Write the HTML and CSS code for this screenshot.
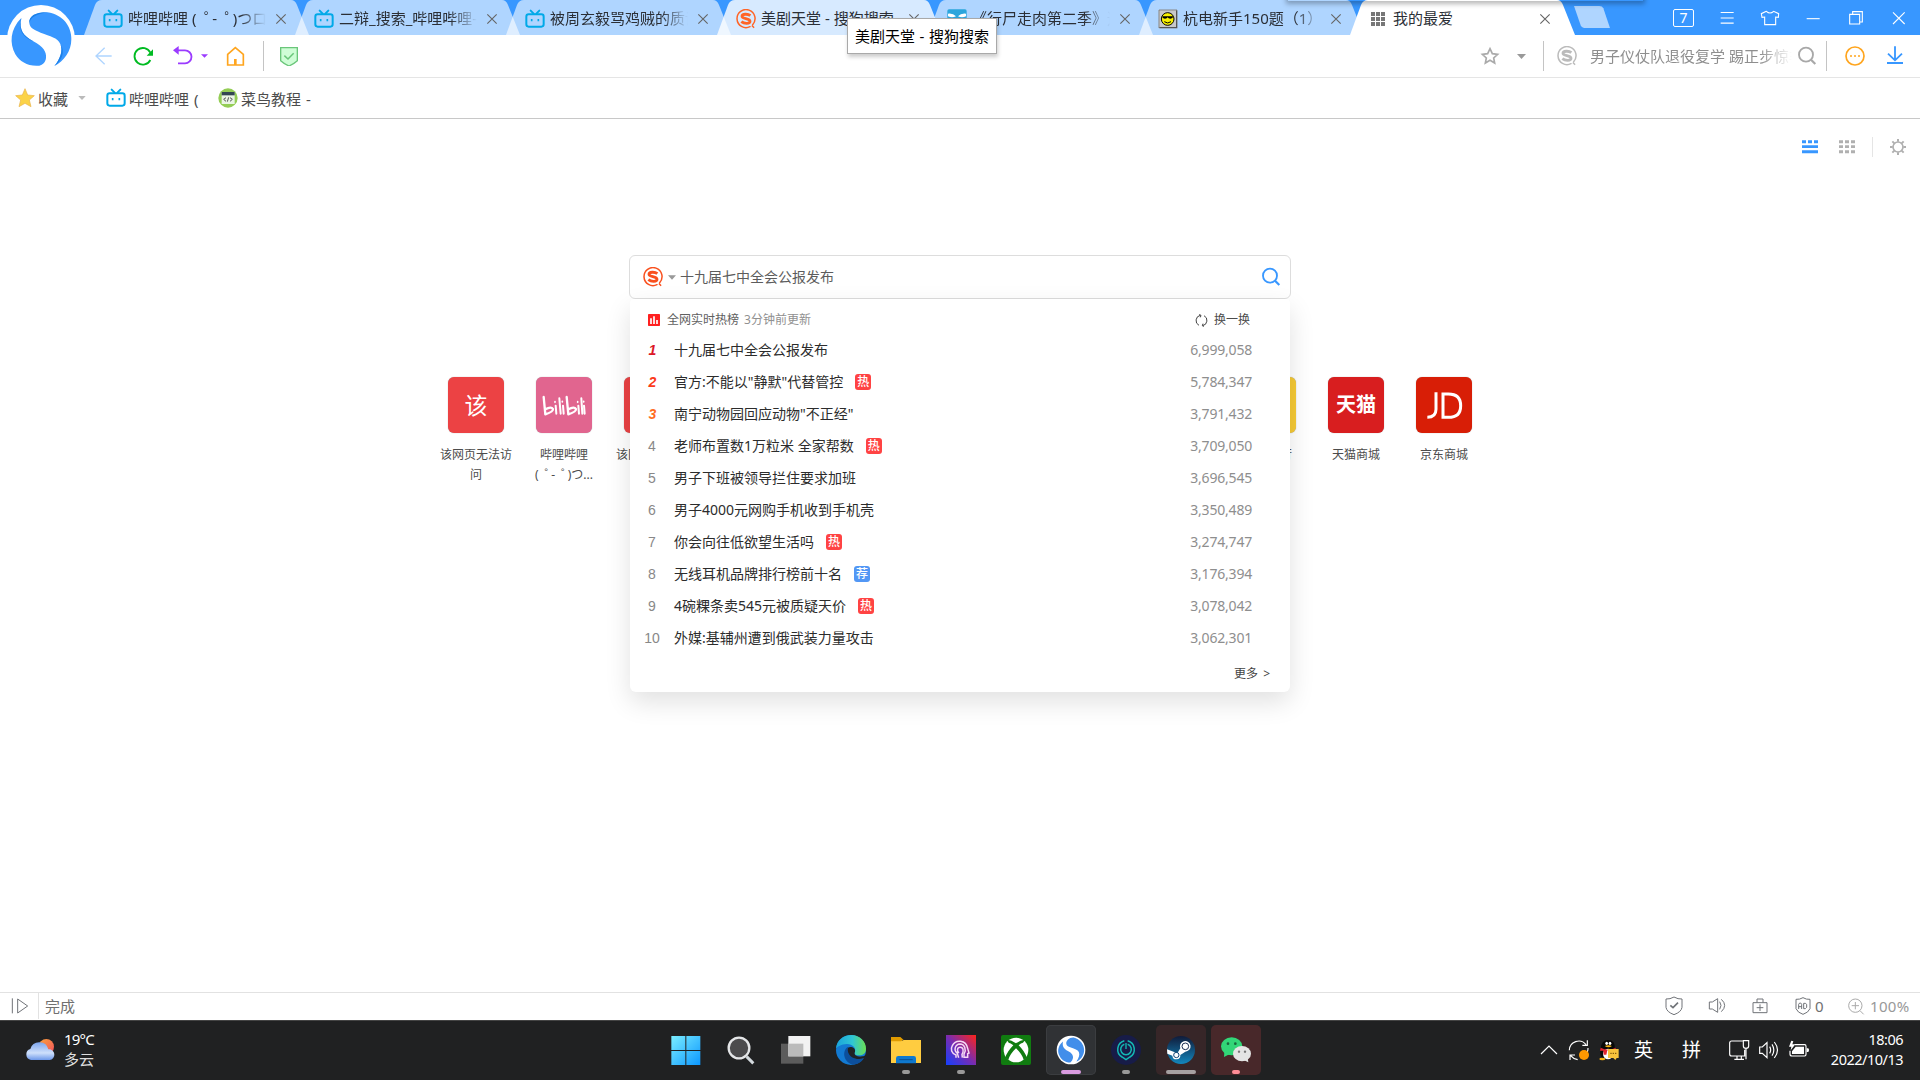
FILE: index.html
```html
<!DOCTYPE html>
<html lang="zh-CN">
<head>
<meta charset="utf-8">
<title>我的最爱</title>
<link rel="stylesheet" href="styles.css">
</head>
<body>
<svg class="defs" width="0" height="0">
  <symbol id="bili" viewBox="0 0 60 60"><path d="M17 5l9 9M43 5l-9 9" stroke="#00a9e8" stroke-width="6" stroke-linecap="round"/><rect x="4" y="16" width="52" height="37" rx="7" fill="none" stroke="#00a9e8" stroke-width="6"/><path d="M20 30v7M40 30v7" stroke="#00a9e8" stroke-width="5"/></symbol>
  <symbol id="sogou" viewBox="0 0 60 60"><path d="M42 53A27 27 0 1 1 50 47M49 51l4 4" fill="none" stroke="currentColor" stroke-width="4.500" stroke-linecap="round"/><path d="M43 20C36 14 18 14 18 22C18 31 42 27 42 37C42 45 25 45 16 38" fill="none" stroke="currentColor" stroke-width="8.500"/></symbol>
  <symbol id="cross" viewBox="0 0 36 36"><path d="M4 4L32 32M32 4L4 32" stroke="currentColor" stroke-width="3.400"/></symbol>
  <symbol id="lens" viewBox="0 0 60 60"><circle cx="27" cy="26" r="21" fill="none" stroke="currentColor" stroke-width="5.500"/><path d="M42 41L55 54" stroke="currentColor" stroke-width="6.500"/></symbol>
</svg>

<header class="tabbar">
  <nav class="tabs">
    <div class="tab"><svg class="fav"><use href="#bili"/></svg><span class="tab-title">哔哩哔哩 (<i class="kana">゜</i>-<i class="kana">゜</i>)つロ</span><svg class="x"><use href="#cross"/></svg></div>
    <div class="tab"><svg class="fav"><use href="#bili"/></svg><span class="tab-title">二辩_搜索_哔哩哔哩-</span><svg class="x"><use href="#cross"/></svg></div>
    <div class="tab"><svg class="fav"><use href="#bili"/></svg><span class="tab-title">被周玄毅骂鸡贼的质询</span><svg class="x"><use href="#cross"/></svg></div>
    <div class="tab hover"><svg class="fav orange"><use href="#sogou"/></svg><span class="tab-title">美剧天堂 - 搜狗搜索</span><svg class="x"><use href="#cross"/></svg></div>
    <div class="tab"><svg class="fav" viewBox="0 0 60 60"><rect x="1" y="1" width="58" height="58" rx="5" fill="#2ba5dc"/><path d="M3 14Q18 12 27 22Q15 28 3 22zM57 14Q42 12 33 22Q45 28 57 22zM20 58L30 34 40 58z" fill="#fff"/></svg><span class="tab-title">《行尸走肉第二季》迅</span><svg class="x"><use href="#cross"/></svg></div>
    <div class="tab"><svg class="fav" viewBox="0 0 60 60"><path d="M2 2H58V58H2z" fill="#c8c8c8"/><path d="M56 4V56H4" fill="none" stroke="#555" stroke-width="4"/><path d="M3 57V3H57" fill="none" stroke="#666" stroke-width="2"/><circle cx="29" cy="30" r="19" fill="#f8f000" stroke="#000" stroke-width="3"/><path d="M13 22H45V25Q42 29 37 29Q31 29 29 25Q27 29 21 29Q15 29 13 25z"/><path d="M19 38Q29 46 39 38" fill="none" stroke="#000" stroke-width="3"/></svg><span class="tab-title">杭电新手150题（1）</span><svg class="x"><use href="#cross"/></svg></div>
    <div class="tab active"><svg class="fav" viewBox="0 0 60 60"><path d="M9 9h12v12H9zM24 9h12v12H24zM39 9h12v12H39zM9 24h12v12H9zM24 24h12v12H24zM39 24h12v12H39zM9 39h12v12H9zM24 39h12v12H24zM39 39h12v12H39z" fill="#777"/></svg><span class="tab-title">我的最爱</span><svg class="x"><use href="#cross"/></svg></div>
  </nav>
  <svg class="newtab" viewBox="0 0 108 66"><path d="M0 0H76Q85 0 88 7L108 66H30Q23 66 20 58z" fill="#afd5ff"/></svg>
  <div class="winctl">
    <span><b class="count">7</b></span>
    <span><svg viewBox="0 0 78 78"><path d="M20 22.500H59M20 39H59M20 54.500H59"/></svg></span>
    <span><svg viewBox="0 0 78 78"><path d="M28 19L13 26L15 37L23 36V59H56V36L64 37L65 26L50 19Q39 29 28 19z"/></svg></span>
    <span><svg viewBox="0 0 78 78"><path d="M20 41H59"/></svg></span>
    <span><svg viewBox="0 0 78 78"><path d="M20 28H50V57H20zM29 28V20H58V51H50"/></svg></span>
    <span><svg viewBox="0 0 78 78"><path d="M21 22L56 57M56 22L21 57"/></svg></span>
  </div>
</header>

<svg class="logo" viewBox="0 0 234 210"><circle cx="123" cy="117" r="102" fill="#fff"/><path d="M64 54C56 90 70 108 100 124C130 140 140 156 138 174C136 188 128 194 118 197C85 200 60 186 46 163C28 130 30 88 64 54z" fill="#3897ff"/><path d="M88 70C86 48 108 36 142 37C190 44 214 80 214 118C214 154 192 184 163 198C180 178 190 152 181 132C172 112 152 110 122 98C100 89 90 84 88 70z" fill="#3897ff"/><path d="M64 54C56 90 70 108 100 124C72 114 52 92 64 54zM88 70C86 48 108 36 142 37C112 42 92 50 88 70zM163 198C180 178 190 152 181 132C198 156 184 184 163 198z" fill="#1c80e8"/></svg>
<div class="topshade"></div>
<div class="tooltip">美剧天堂 - 搜狗搜索</div>

<section class="toolbar">
  <svg class="ic" viewBox="282 138 60 60"><path d="M335 168H288M314 143L288 168L314 193" fill="none" stroke="#afd5ff" stroke-width="4"/></svg>
  <svg class="ic g19" viewBox="399 138 60 60"><path d="M451 158A25 25 0 1 0 451 180" fill="none" stroke="#0b2" stroke-width="5.500"/><path d="M459 148V167H440z" fill="#0b2"/></svg>
  <svg class="ic g20" viewBox="519 138 60 60"><path d="M530 151H555A19.500 19.500 0 0 1 555 190H534" fill="none" stroke="#9b3bff" stroke-width="5.500"/><path d="M519 151L536 138V164z" fill="#9b3bff"/></svg>
  <svg class="caret purple" viewBox="0 0 20 10"><path d="M0 0H20L10 10z"/></svg>
  <svg class="ic g18" viewBox="678 138 60 60"><path d="M683 163L706 143L730 163V195H683z" fill="none" stroke="#ffa51e" stroke-width="5"/><path d="M706 195V177" stroke="#ffa51e" stroke-width="8"/></svg>
  <i class="vr g17"></i>
  <svg class="ic g15" viewBox="837 138 60 60"><path d="M842 143H892V182Q882 191 867 198Q852 191 842 182z" fill="#cffdd6" stroke="#6ac67a" stroke-width="4"/><path d="M853 167L864 177L881 160" fill="none" stroke="#6ac67a" stroke-width="4.500"/></svg>
  <div class="tools">
    <svg class="ic" viewBox="240 138 60 60"><path d="M270 146L277 161L293 163L281 174L284 189L270 181L256 189L259 174L247 163L263 161z" fill="none" stroke="#aaa" stroke-width="5"/></svg>
    <svg class="caret grey" viewBox="0 0 26 14"><path d="M0 0H26L13 14z"/></svg>
    <i class="vr g17"></i>
    <svg class="ic g13 silver"><use href="#sogou"/></svg>
    <span class="quick">男子仪仗队退役复学 踢正步惊艳</span>
    <svg class="ic silver2"><use href="#lens"/></svg>
    <i class="vr g9"></i>
    <svg class="ic g18" viewBox="0 0 60 60"><circle cx="30" cy="30" r="27" fill="none" stroke="#ffa51e" stroke-width="5"/><path d="M15 30h6M27 30h6M39 30h6" stroke="#ffa51e" stroke-width="5"/></svg>
    <svg class="ic g20" viewBox="0 0 60 60"><path d="M30 1V43M9 23L30 43L51 23M6 51H54" fill="none" stroke="#3897ff" stroke-width="5.500"/></svg>
  </div>
</section>

<section class="bookmarks">
  <svg class="ic" viewBox="0 0 60 60"><path d="M30 2L38 21L58 23L43 36L48 56L30 46L12 56L17 36L2 23L22 21z" fill="#fbd348" stroke="#e8b24a" stroke-width="2"/></svg><span class="fav-t">收藏</span>
  <svg class="caret light" viewBox="0 0 26 14"><path d="M0 0H26L13 14z"/></svg>
  <svg class="ic g20"><use href="#bili"/></svg><span class="bm">哔哩哔哩 (</span>
  <svg class="ic" viewBox="0 0 60 60"><circle cx="30" cy="30" r="29" fill="#94cd55"/><rect x="11" y="12" width="39" height="36" fill="#eaf5e4"/><path d="M11 12H50V22H11z" fill="#334652"/><path d="M24 29L17 34L24 40M36 29L43 34L36 40M32 28L28 41" fill="none" stroke="#555" stroke-width="3"/></svg><span class="bm">菜鸟教程 -</span>
</section>

<main class="page">
  <div class="view">
    <svg viewBox="0 0 48 42"><path d="M0 1h12v9H0zM18 1h12v9H18zM36 1h12v9H36zM0 16h48v8H0zM0 31h48v9H0z" fill="#3897ff"/></svg>
    <svg viewBox="0 0 48 42"><path d="M0 1h12v9H0zM18 1h12v9H18zM36 1h12v9H36zM0 16h12v8H0zM18 16h12v8H18zM36 16h12v8H36zM0 31h12v9H0zM18 31h12v9H18zM36 31h12v9H36z" fill="#b0b0b0"/></svg>
    <i></i>
    <svg class="gear" viewBox="0 0 48 48"><circle cx="24" cy="24" r="15" fill="none" stroke="#b0b0b0" stroke-width="5"/><path d="M24 0v8M24 40v8M0 24h8M40 24h8M7 7l6 6M35 35l6 6M41 7l-6 6M13 35l-6 6" stroke="#b0b0b0" stroke-width="6"/></svg>
  </div>

  <div class="search">
    <svg class="ic orange2"><use href="#sogou"/></svg>
    <svg class="caret mid" viewBox="0 0 26 14"><path d="M0 0H26L13 14z"/></svg>
    <span class="query">十九届七中全会公报发布</span>
    <svg class="ic blue"><use href="#lens"/></svg>
    <div class="panel">
      <div class="phead"><svg viewBox="0 0 36 36"><rect width="36" height="36" rx="2" fill="#ff2020"/><path d="M9 30V13M18 30V7M27 30V18" stroke="#fff" stroke-width="5"/></svg><span>全网实时热榜</span><em>3分钟前更新</em>
        <svg class="swap" viewBox="0 0 39 39"><path d="M16 4A16 16 0 0 0 12 34M23 35A16 16 0 0 0 27 5M12 2L18 4L16 10M27 37L22 35L24 29" fill="none" stroke="#444" stroke-width="3"/></svg><span class="swap-t">换一换</span></div>
      <ol class="hot">
        <li><b class="r1">1</b><span>十九届七中全会公报发布</span><u>6,999,058</u></li>
        <li><b class="r2">2</b><span>官方:不能以"静默"代替管控</span><s>热</s><u>5,784,347</u></li>
        <li><b class="r3">3</b><span>南宁动物园回应动物"不正经"</span><u>3,791,432</u></li>
        <li><b>4</b><span>老师布置数1万粒米 全家帮数</span><s>热</s><u>3,709,050</u></li>
        <li><b>5</b><span>男子下班被领导拦住要求加班</span><u>3,696,545</u></li>
        <li><b>6</b><span>男子4000元网购手机收到手机壳</span><u>3,350,489</u></li>
        <li><b>7</b><span>你会向往低欲望生活吗</span><s>热</s><u>3,274,747</u></li>
        <li><b>8</b><span>无线耳机品牌排行榜前十名</span><s class="rec">荐</s><u>3,176,394</u></li>
        <li><b>9</b><span>4碗粿条卖545元被质疑天价</span><s>热</s><u>3,078,042</u></li>
        <li><b>10</b><span>外媒:基辅州遭到俄武装力量攻击</span><u>3,062,301</u></li>
      </ol>
      <div class="more">更多 &gt;</div>
    </div>
  </div>

  <div class="tiles">
    <div class="site"><div class="tile red">该</div><p>该网页无法访问</p></div>
    <div class="site"><div class="tile pink"><svg viewBox="348 411 168 168" fill="none" stroke="#fff" stroke-linecap="round" stroke-linejoin="round"><path d="M371 471L376 523Q400 515 399 507Q394 498 376 508M440 471L445 523Q469 515 468 507Q463 498 445 508" stroke-width="7"/><path d="M407 497L409 521M418 475L422 521M429 497L431 521M475 497L477 521M484 475L487 521M492 497L494 521" stroke-width="6"/><path d="M405 485v2M427 484v2M473 485v2M491 484v2" stroke-width="5"/></svg></div><p>哔哩哔哩<br>(<i class="kana">゜</i>-<i class="kana">゜</i>)つ...</p></div>
    <div class="site"><div class="tile red"></div><p>该网页无法访问</p></div>
    <div class="site gap"><div class="tile yellow"></div><p>飞猪旅行</p></div>
    <div class="site"><div class="tile tmall">天猫</div><p>天猫商城</p></div>
    <div class="site"><div class="tile jd"><svg viewBox="828 411 168 168" fill="none" stroke="#fff" stroke-width="9"><path d="M888 457V508Q888 532 862 532M909 462H925Q962 462 962 497Q962 532 925 532H909z"/></svg></div><p>京东商城</p></div>
  </div>
</main>

<footer class="status">
  <svg class="play" viewBox="33 56 54 48"><path d="M37 57V102M53 59V101L83 80z"/></svg>
  <i class="line"></i><span>完成</span>
  <div class="sright">
    <svg viewBox="495 48 54 60"><path d="M522 51Q510 58 498 57V82Q500 96 522 104Q544 96 546 82V57Q534 58 522 51z"/><path d="M511 76L519 83L534 68" stroke-width="5"/></svg>
    <svg viewBox="621 48 54 60"><path d="M625 66H634L650 56V97L634 87H625zM656 65Q664 76 656 88M661 58Q681 76 661 95"/></svg>
    <svg viewBox="752 48 54 60"><path d="M758 68H800V98H758zM770 68V57H788V68M779 73V93M769 83H789"/></svg>
    <svg viewBox="881 48 54 60"><path d="M908 53Q898 59 887 58V86Q892 98 908 103Q924 98 929 86V58Q918 59 908 53z"/><path d="M895 87V73L898 69H901L904 73V87M895 80H904M910 70V86H915L919 82V73L915 70z"/></svg>
    <span class="zero">0</span>
    <svg class="zoomi" viewBox="1041 48 54 60"><circle cx="1066" cy="77" r="20"/><path d="M1066 66V88M1055 77H1077M1080 92L1091 103"/></svg>
    <span class="pct">100%</span>
  </div>
</footer>

<footer class="taskbar">
  <div class="weather">
    <svg viewBox="0 0 90 66"><defs><linearGradient id="sun" x1="0" x2="1" y2="1"><stop stop-color="#f9a33c"/><stop offset="1" stop-color="#f4505e"/></linearGradient><linearGradient id="cl" x2="0" y2="1"><stop stop-color="#7da6f0"/><stop offset=".6" stop-color="#cfe0fb"/><stop offset="1" stop-color="#6d98ea"/></linearGradient></defs><circle cx="64" cy="23" r="23" fill="url(#sun)"/><path d="M18 63A17 17 0 0 1 16 30A28 28 0 0 1 70 31A16 16 0 0 1 74 63z" fill="url(#cl)"/></svg>
    <div><p class="deg">19°C</p><p>多云</p></div>
  </div>
  <div class="apps">
    <div class="app"><svg viewBox="0 0 90 90"><defs><linearGradient id="win" gradientUnits="userSpaceOnUse" x1="0" y1="0" x2="90" y2="90"><stop stop-color="#7df0ff"/><stop offset="1" stop-color="#0a96ff"/></linearGradient></defs><path d="M1 3H43V45H1zM46 3H88V45H46zM1 48H43V90H1zM46 48H88V90H46z" fill="url(#win)"/></svg></div>
    <div class="app"><svg viewBox="0 0 90 90"><circle cx="39" cy="39" r="31" fill="#4b4b4d" stroke="#e4e6e8" stroke-width="7"/><path d="M62 65L82 85" stroke="#d4dade" stroke-width="9"/></svg></div>
    <div class="app"><svg viewBox="0 0 90 90"><rect x="0" y="26" width="67" height="60" fill="#5c5c5c"/><rect x="22" y="3" width="66" height="61" fill="#f2f2f2"/><rect x="22" y="26" width="45" height="38" fill="#bbb"/></svg></div>
    <div class="app"><svg viewBox="0 0 90 90"><defs><linearGradient id="eg" x2="1"><stop stop-color="#19a3dc"/><stop offset=".55" stop-color="#30c6d3"/><stop offset="1" stop-color="#6be052"/></linearGradient></defs><circle cx="45" cy="45" r="45" fill="#137ad2"/><path d="M0 40C2 16 22 0 46 0C72 0 90 20 90 41C90 56 79 62 68 61C56 60 54 56 57 50C61 38 48 26 32 27C16 28 4 35 0 40z" fill="url(#eg)"/><path d="M36 36C20 44 18 78 50 89C66 88 78 80 84 69C66 76 42 70 36 36z" fill="#0c4f9c"/><path d="M57 50C52 60 62 66 82 64L90 60V72L84 69C64 78 30 66 36 38C44 32 60 38 57 50z" fill="#202224"/><path d="M84 68L92 58V80z" fill="#202224"/></svg></div>
    <div class="app"><svg viewBox="0 0 90 90"><path d="M0 6H28L38 15H34L30 30H0z" fill="#e09b00"/><path d="M0 19H30L38 15H90V84H0z" fill="#ffcc40"/><path d="M15 85V70Q15 63 22 63H68Q75 63 75 70V85z" fill="#0f79cf"/><path d="M25 74H65" stroke="#0b4f91" stroke-width="3"/></svg><i class="dot"></i></div>
    <div class="app"><svg viewBox="0 0 90 90"><defs><linearGradient id="ap" x1="0" y1="1" x2="1" y2="0"><stop stop-color="#1440ff"/><stop offset=".5" stop-color="#7a2cb0"/><stop offset="1" stop-color="#ff2418"/></linearGradient></defs><path d="M0 0H90V90H0z" fill="url(#ap)"/><path d="M30 68V60C16 55 13 42 19 32C29 12 60 14 65 40L69 54L65 56V67H54V57C62 44 56 27 42 27C27 28 22 46 34 55L38 68M49 68L48 58C54 48 52 37 43 37C33 37 32 48 39 54" fill="none" stroke="#f5d8f4" stroke-width="4.500"/></svg><i class="dot"></i></div>
    <div class="app"><svg viewBox="0 0 90 90"><rect width="90" height="90" rx="6" fill="#107c10"/><circle cx="45" cy="45" r="37" fill="#fff"/><path d="M18 15Q28 13 45 25Q62 13 72 15L66 23Q60 24 53 31Q72 50 77 68L68 74Q62 56 45 40Q28 56 22 74L13 68Q18 50 37 31Q28 23 23 23z" fill="#107c10"/></svg></div>
    <div class="app on"><svg viewBox="12 6 222 222"><circle cx="123" cy="117" r="106" fill="#fff"/><path d="M64 54C56 90 70 108 100 124C130 140 140 156 138 174C136 188 128 200 118 210C75 208 50 186 40 163C20 130 24 88 64 54z" fill="#428eea"/><path d="M88 70C86 48 108 24 142 25C190 34 220 80 220 118C220 158 192 192 163 202C180 178 190 152 181 132C172 112 152 110 122 98C100 89 90 84 88 70z" fill="#428eea"/></svg><i class="dot lilac"></i></div>
    <div class="app"><svg viewBox="0 0 90 90"><circle cx="45" cy="45" r="45" fill="#171c48"/><g fill="none" stroke="#14b8b4" stroke-width="4.500"><path d="M40 17A27 27 0 0 0 33 66L45 74L57 66A27 27 0 0 0 50 17"/><path d="M40 28A16 16 0 1 0 50 28"/><path d="M45 24V42" stroke-width="4"/></g></svg><i class="dot"></i></div>
    <div class="app steam"><svg viewBox="0 0 90 90"><defs><linearGradient id="st" x2="0" y2="1"><stop stop-color="#101b3a"/><stop offset="1" stop-color="#1387bd"/></linearGradient></defs><circle cx="45" cy="45" r="42" fill="url(#st)"/><path d="M3 43L34 55L43 40A16 16 0 1 1 58 50L43 60A12 12 0 0 1 19 62L4 56z" fill="#fff"/><circle cx="58" cy="34" r="10" fill="none" stroke="#1a2d50" stroke-width="3"/><circle cx="31" cy="60" r="8" fill="none" stroke="#1a4a78" stroke-width="3"/></svg><i class="dot wide"></i></div>
    <div class="app wechat"><svg viewBox="0 0 90 90"><ellipse cx="32" cy="34" rx="32" ry="27" fill="#32d678"/><path d="M10 50L9 66L25 58z" fill="#32d678"/><ellipse cx="63" cy="56" rx="27" ry="23" fill="#e4e4e4"/><path d="M68 75L82 82L80 68z" fill="#e4e4e4"/><g fill="#17683c"><circle cx="21" cy="26" r="4"/><circle cx="43" cy="26" r="4"/></g><g fill="#777"><circle cx="54" cy="50" r="3.500"/><circle cx="72" cy="50" r="3.500"/></g></svg><i class="dot rose"></i></div>
  </div>
  <svg class="tray" viewBox="120 174 240 72"><path d="M123 222L147 198L171 222" class="w"/><path d="M208 211A28 28 0 0 1 258 194M262 181V196H247M264 204A28 28 0 0 1 262 216M210 240V225H225M212 227Q220 237 233 239" class="w"/><circle cx="252" cy="225" r="15" fill="#ff9800"/><path d="M302 206Q304 180 325 180Q346 180 344 206Q350 220 346 234H306Q298 224 302 206z" fill="#080808"/><ellipse cx="324" cy="222" rx="15" ry="16" fill="#fff"/><path d="M302 203Q325 215 347 203V211H322L319 224H311L310 212H300z" fill="#e3252e"/><ellipse cx="320" cy="190" rx="4" ry="5" fill="#fff"/><ellipse cx="330" cy="190" rx="4" ry="5" fill="#fff"/><path d="M314 198Q325 194 336 198Q325 206 314 198z" fill="#f8b413"/><ellipse cx="307" cy="237" rx="9" ry="4" fill="#f8b413"/><path d="M324 207H356V234H350L346 240L340 234H324z" fill="#f7c23c"/><path d="M331 220h4M338 220h4M345 220h4" stroke="#6b4500" stroke-width="3"/></svg>
  <span class="ime">英</span><span class="ime two">拼</span>
  <svg class="sys" viewBox="684 174 246 72"><path d="M728 183H695Q689 183 689 189V222Q689 228 695 228H734V209M703 238H732M711 228V238M724 228V238M730 182H746V198Q746 205 738 205Q730 205 730 198zM738 205V238" class="w"/><path d="M779 201H787L801 188V233L787 220H779zM809 200Q815 210 809 220M816 193Q827 210 816 227M823 186Q842 210 823 234" class="w"/><path d="M884 194H914Q918 194 918 199V223Q918 228 914 228H876Q870 228 870 222V212" class="w"/><path d="M887 200H912V222H876V214zM920 205H924Q927 205 927 210Q927 216 924 216H920zM874 182L880 184L877 193H886L872 211L874 200H867z" fill="#fff"/></svg>
  <div class="clock">18:06<br>2022/10/13</div>
</footer>
</body>
</html>
```
FILE: styles.css
```css
* { box-sizing: border-box; }
body { margin: 0; width: 1920px; height: 1080px; overflow: hidden; position: relative; display: flex; flex-direction: column; background: #fff; font-family: "Noto Sans", "Noto Sans CJK SC", sans-serif; font-size: 15px; color: #333; }
p { margin: 0; }
svg { display: block; flex: none; }
.defs { position: absolute; }
.kana { font-style: normal; display: inline-block; text-indent: .5em; margin-right: -.45em; }

.tabbar { height: 35px; flex: none; display: flex; background: #3897ff; }
.tabs { display: flex; margin-left: 84px; }
.tab { width: 225px; height: 35px; margin-right: -14px; padding: 3px 14px 0 19px; display: flex; align-items: center; background: rgba(255,255,255,.6); clip-path: path("M0 35L11 5Q13 0 18 0H207Q211 0 213 5L225 35Z"); color: #2b2f36; }
.tab.hover { background: rgba(255,255,255,.8); }
.tab.active { background: #fff; padding-left: 18px; }
.fav { width: 20px; height: 20px; }
.orange { color: #ff6426; }
.tab-title { width: 139px; height: 24px; margin-left: 5px; line-height: 23px; white-space: nowrap; overflow: hidden; -webkit-mask-image: linear-gradient(90deg, #000 112px, transparent 138px); mask-image: linear-gradient(90deg, #000 112px, transparent 138px); }
.hover .tab-title, .active .tab-title { -webkit-mask-image: none; mask-image: none; }
.x { width: 12px; height: 12px; margin-left: 8px; color: #666; }
.active .x { margin-left: 7px; }
.newtab { width: 36px; height: 22px; margin: 6px 0 0 13px; }
.winctl { display: flex; margin-left: auto; }
.winctl span { width: 43px; height: 35px; display: flex; align-items: center; justify-content: center; }
.winctl svg { width: 26px; height: 26px; fill: none; stroke: #fff; stroke-width: 3.300; }
.count { width: 21px; height: 18px; border: 1px solid #fff; border-radius: 2px; color: #fff; font: 14px/15px "Noto Sans", sans-serif; text-align: center; }
.logo { position: absolute; left: 0; top: 0; width: 78px; height: 70px; }
.topshade { position: absolute; left: 1288px; top: -8px; width: 355px; height: 9px; box-shadow: 0 1px 5px 2px rgba(0,0,0,.28); }
.tooltip { position: absolute; left: 847px; top: 18px; width: 150px; height: 36px; border: 1px solid #a9a9a9; background: #fff; color: #000; line-height: 34px; word-spacing: .7px; text-align: center; box-shadow: 1px 3px 4px rgba(0,0,0,.2); white-space: nowrap; }

.toolbar { height: 43px; flex: none; display: flex; align-items: center; padding-left: 94px; border-bottom: 1px solid #e5e5e5; }
.ic { width: 20px; height: 20px; }
.g9 { margin-left: 9px; } .g13 { margin-left: 13px; } .g15 { margin-left: 15px; } .g17 { margin-left: 17px; } .g18 { margin-left: 18px; } .g19 { margin-left: 19px; } .g20 { margin-left: 20px; }
.vr { width: 1px; height: 30px; background: #c4c4c4; }
.caret { width: 8px; height: 4px; }
.purple { width: 7px; margin-left: 8px; fill: #9b3bff; }
.grey { width: 9px; height: 5px; margin-left: 17px; fill: #999; }
.light { margin: 0 0 0 10px; fill: #bbb; }
.mid { height: 5px; margin-left: 5px; fill: #999; }
.tools { margin-left: auto; margin-right: 15px; display: flex; align-items: center; }
.silver { color: #bbb; } .silver2 { color: #a8a8a8; margin-left: 5px; }
.quick { width: 202px; height: 24px; margin-left: 13px; line-height: 25px; color: #8e8e8e; white-space: nowrap; overflow: hidden; -webkit-mask-image: linear-gradient(90deg, #000 170px, transparent 202px); mask-image: linear-gradient(90deg, #000 170px, transparent 202px); }

.bookmarks { height: 41px; flex: none; display: flex; align-items: center; padding-left: 15px; border-bottom: 1px solid #c8c8c8; color: #4c4c4c; line-height: 22px; white-space: nowrap; }
.fav-t { width: 30px; margin-left: 3px; padding-top: 2px; }
.bm { width: 89px; margin-left: 3px; padding-top: 2px; word-spacing: 1px; }

.page { height: 873px; flex: none; padding-top: 18px; }
.view { display: flex; align-items: center; justify-content: flex-end; gap: 17px; height: 20px; padding-right: 14px; }
.view svg { width: 16px; height: 14px; margin-right: 4px; }
.view i { width: 1px; height: 20px; background: #e5e5e5; margin-left: -4px; }
.view svg.gear { height: 16px; margin: 0; }

.search { position: relative; z-index: 2; width: 662px; height: 44px; margin: 98px 0 0 629px; display: flex; align-items: center; padding: 0 9px 0 13px; border: 1px solid #ddd; border-radius: 6px; background: #fff; }
.orange2 { color: #f9501e; }
.query { margin-left: 4px; font-size: 14px; line-height: 20px; color: #5c5c5c; }
.blue { margin-left: auto; color: #3897ff; }
.panel { position: absolute; left: 0; top: 43px; width: 660px; height: 393px; background: #fff; border-radius: 4px 4px 6px 6px; box-shadow: 0 10px 26px rgba(0,0,0,.12); }
.phead { height: 35px; padding: 7px 38px 0 18px; display: flex; align-items: center; font-size: 12px; line-height: 18px; color: #606060; white-space: nowrap; }
.phead svg { width: 12px; height: 12px; margin-right: 7px; }
.phead em { font-style: normal; margin-left: 5px; color: #909090; }
.phead svg.swap { width: 13px; height: 13px; margin: 0 6px 0 auto; }
.swap-t { margin-right: 2px; color: #4c4c4c; }
.hot { list-style: none; margin: 0; padding: 0; }
.hot li { height: 32px; display: flex; align-items: center; padding: 0 38px 0 12px; font-size: 14px; line-height: 20px; white-space: nowrap; color: #2c2c2c; }
.hot b { width: 20px; margin-right: 12px; text-align: center; font: 14px "Liberation Sans", sans-serif; color: #888; }
.hot .r1, .hot .r2, .hot .r3 { font-weight: bold; font-style: italic; padding-left: 1px; }
.hot .r1 { color: #dc1828; } .hot .r2 { color: #fb3a1a; } .hot .r3 { color: #ff6d1f; }
.hot s { text-decoration: none; width: 16px; height: 16px; margin-left: 12px; border-radius: 3px; background: #ff4343; color: #fff; font-size: 12px; font-weight: 500; line-height: 15px; text-align: center; }
.hot s.rec { background: #5297f5; }
.hot u { text-decoration: none; margin-left: auto; color: #8e8e8e; letter-spacing: -.2px; }
.more { padding: 11px 20px 0; text-align: right; font-size: 12px; line-height: 18px; word-spacing: 2px; color: #444; }

.tiles { display: flex; gap: 8px; margin: 78px 0 0 436px; }
.site { width: 80px; display: flex; flex-direction: column; align-items: center; font-size: 12px; line-height: 20px; color: #4c4c4c; text-align: center; }
.site.gap { margin-left: 528px; }
.site p { width: 74px; margin-top: 12px; }
.tile { width: 56px; height: 56px; border-radius: 6px; display: flex; align-items: center; justify-content: center; color: #fff; font-size: 23px; box-shadow: 0 0 1px rgba(0,0,0,.4); }
.tile svg { width: 56px; height: 56px; }
.red { background: #ec4244; } .pink { background: #e1658f; } .yellow { background: #f6ca35; }
.tmall { background: #d81e1f; font-size: 20px; font-weight: 700; } .jd { background: #d81e06; }

.status { height: 28px; flex: none; display: flex; align-items: center; padding: 0 0 1px 11px; border-top: 1px solid #e2e2e2; color: #707070; }
.status svg { width: 18px; height: 20px; fill: none; stroke: #707378; stroke-width: 3; }
.status .play { width: 18px; height: 16px; }
.status > span { line-height: 22px; margin-top: -1px; }
.line { width: 1px; height: 26px; margin: 0 6px 0 9px; background: #e2e2e2; }
.sright { margin-left: auto; display: flex; align-items: center; padding-right: 9px; line-height: 22px; }
.sright svg { margin-right: 25px; }
.sright svg:nth-of-type(4) { margin-right: 3px; }
.sright svg.zoomi { margin-right: 5px; stroke: #aaa; }
.zero { width: 32px; }
.pct { color: #999; width: 41px; letter-spacing: .3px; }

.taskbar { height: 60px; flex: none; display: flex; align-items: center; background: #202122; border-top: 1px solid #444; padding-bottom: 1px; color: #fff; }
.weather { display: flex; align-items: center; width: 661px; padding-left: 25px; line-height: 20px; }
.weather svg { width: 30px; height: 22px; margin-right: 9px; margin-top: -1px; }
.weather div { margin-top: -3px; }
.weather p { color: #ddd; }
.weather .deg { color: #fff; letter-spacing: -.8px; }
.apps { display: flex; gap: 5px; }
.app { width: 50px; height: 50px; padding-top: 10px; border-radius: 5px; display: flex; flex-direction: column; align-items: center; }
.app svg { width: 30px; height: 30px; }
.on { background: #303235; box-shadow: inset 0 0 0 1px #3b3d40; }
.steam { background: #372628; } .wechat { background: #48282a; }
.dot { width: 8px; height: 4px; border-radius: 2px; background: #999; margin-top: 5px; }
.lilac { width: 20px; background: #d99be0; } .wide { width: 30px; background: #a5a0a1; } .rose { background: #ff8d97; }
.w { fill: none; stroke: #fff; stroke-width: 3.500; }
.tray { width: 80px; height: 24px; margin-left: 279px; }
.ime { font-size: 19px; line-height: 24px; width: 19px; margin-left: 14px; }
.two { margin-left: 29px; }
.sys { width: 82px; height: 24px; margin-left: 27px; }
.clock { margin: -3px 0 0 auto; padding-right: 17px; text-align: right; font-size: 14.500px; line-height: 20px; letter-spacing: -.5px; white-space: nowrap; }
```
